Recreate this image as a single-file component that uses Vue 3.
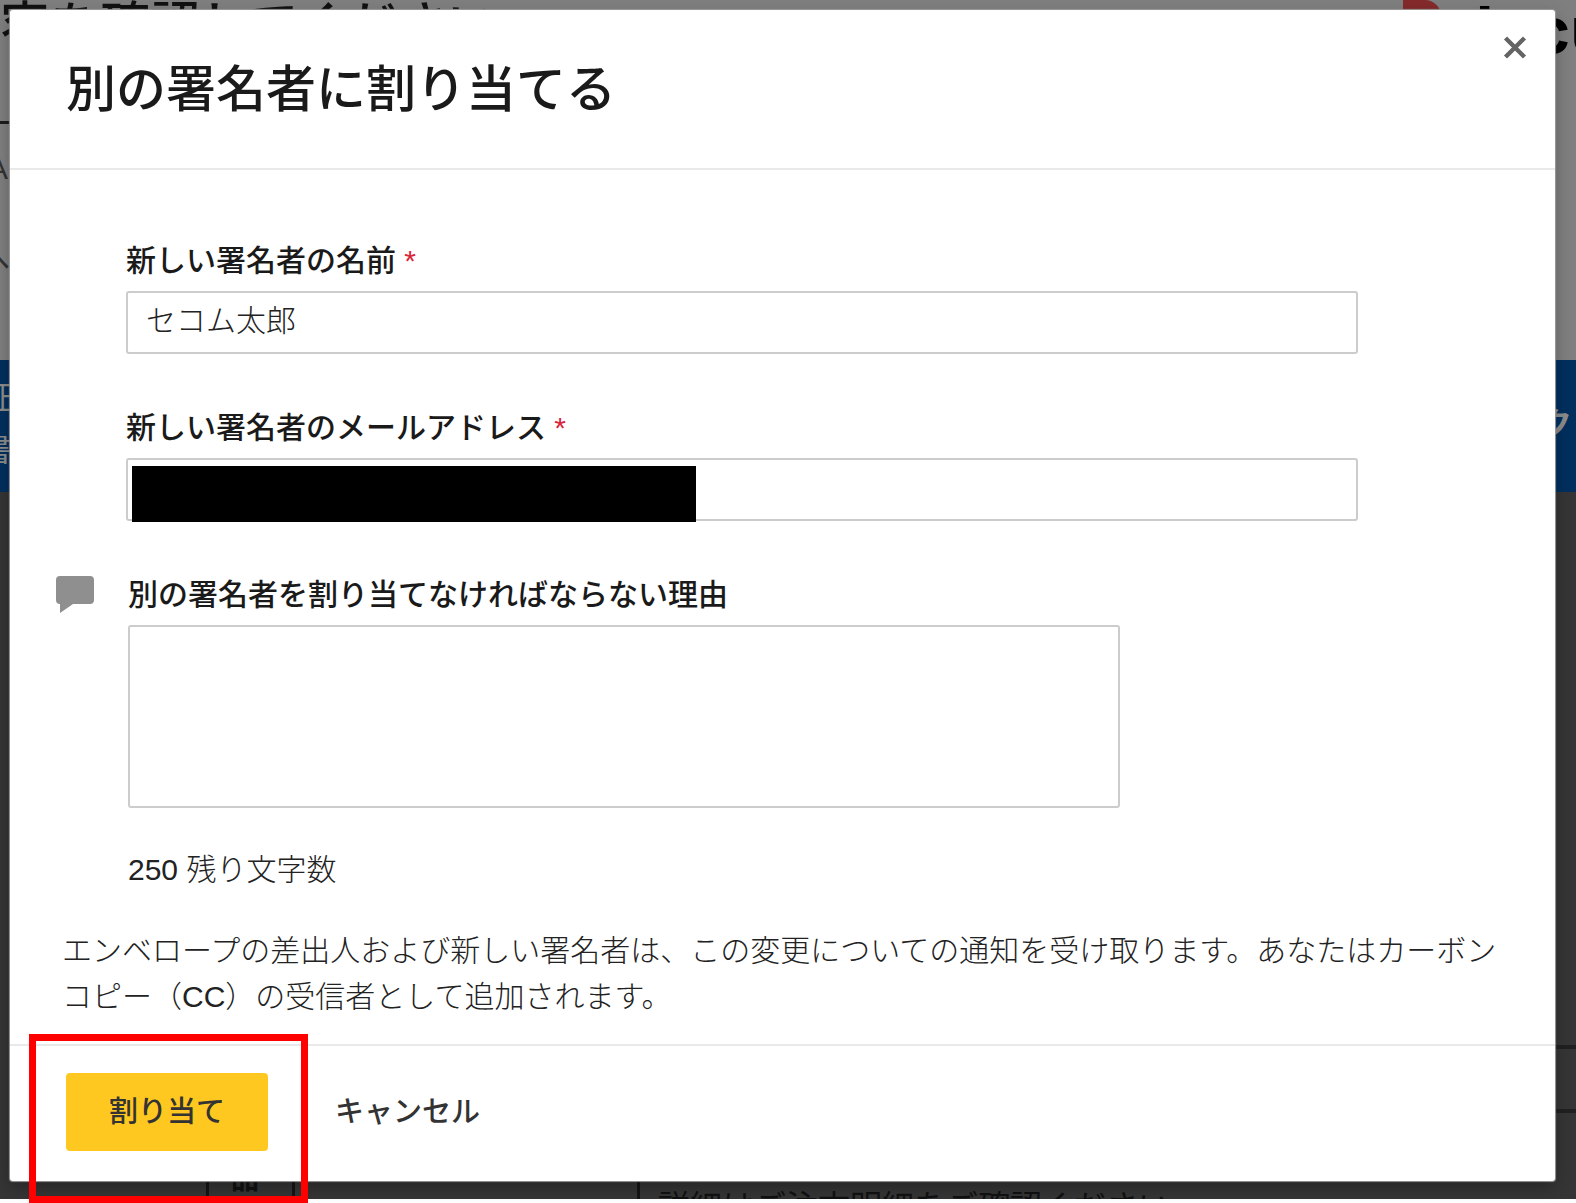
<script setup>
import { ref, computed } from 'vue'

const MAX_LENGTH = 250
const signerName = ref('セコム太郎')
const signerEmail = ref('')
const reason = ref('')
const remaining = computed(() => MAX_LENGTH - reason.value.length)
</script>

<template>
  <div class="page">
    <div class="backdrop" aria-hidden="true">
      <div class="top-area">
        <div class="top-main">
          <div class="top-heading">容を確認してください</div>
          <div class="top-rule"></div>
          <div class="peek first">A</div>
          <div class="peek second">へ</div>
        </div>
        <div class="brand">
          <span class="brand-mark"></span>
          <span class="brand-name">docusign</span>
        </div>
      </div>
      <div class="band">
        <div class="band-left">証<br />書</div>
        <div class="band-right">ク</div>
      </div>
      <div class="document">
        <div class="doc-rows"></div>
        <div class="doc-table">
          <div class="cell item">品</div>
          <div class="cell blank"></div>
          <div class="cell detail">詳細はご注文明細をご確認ください</div>
        </div>
      </div>
    </div>

    <main class="modal" role="dialog" aria-labelledby="dialog-title">
      <header class="modal-header">
        <h1 id="dialog-title">別の署名者に割り当てる</h1>
        <button class="close" type="button" aria-label="閉じる">
          <svg viewBox="0 0 24 24" width="24" height="24">
            <path d="M2.5 2 21.5 21M21.5 2 2.5 21" fill="none" stroke="#646464" stroke-width="4.4" />
          </svg>
        </button>
      </header>

      <section class="modal-body">
        <div class="field">
          <label for="signer-name">新しい署名者の名前 <span class="required">*</span></label>
          <input id="signer-name" v-model="signerName" type="text" />
        </div>
        <div class="field">
          <label for="signer-email">新しい署名者のメールアドレス <span class="required">*</span></label>
          <div class="masked">
            <input id="signer-email" v-model="signerEmail" type="email" />
            <span class="mask"></span>
          </div>
        </div>
        <div class="comment">
          <svg class="comment-icon" viewBox="0 0 38 38" width="38" height="38">
            <path d="M4 0H34Q38 0 38 4V24Q38 28 34 28H17L4 37V28Q0 28 0 24V4Q0 0 4 0Z" fill="#8f8f8f" />
          </svg>
          <div class="comment-main">
            <label for="reason">別の署名者を割り当てなければならない理由</label>
            <textarea id="reason" v-model="reason" :maxlength="MAX_LENGTH"></textarea>
            <div class="counter">{{ remaining }} 残り文字数</div>
          </div>
        </div>
        <p class="notice">エンベロープの差出人および新しい署名者は、この変更についての通知を受け取ります。あなたはカーボンコピー（CC）の受信者として追加されます。</p>
      </section>

      <footer class="modal-footer">
        <button class="primary" type="button">割り当て</button>
        <button class="cancel" type="button">キャンセル</button>
        <span class="highlight"></span>
      </footer>
    </main>
  </div>
</template>

<style>
body {
  margin: 0;
  background: #fff;
}
</style>

<style scoped>
* {
  box-sizing: border-box;
}
.page {
  display: grid;
  grid-template-columns: minmax(0, 1fr);
  font-family: "Liberation Sans", "Noto Sans CJK JP", sans-serif;
  font-size: 30px;
  color: #222;
}
.page > * {
  grid-area: 1 / 1;
}

/* Dimmed page behind the dialog */
.backdrop {
  display: flex;
  flex-direction: column;
  margin-bottom: 4px;
  overflow: hidden;
  white-space: nowrap;
}
.top-area {
  display: flex;
  justify-content: space-between;
  height: 360px;
  background: #7f7f7f;
  color: #111;
}
.top-heading {
  height: 121px;
  font-size: 50px;
  font-weight: 500;
  line-height: 52px;
}
.top-rule {
  height: 3px;
  background: #1c1c1c;
}
.peek {
  margin-left: -12px;
  color: #333;
  line-height: 90px;
}
.peek.second {
  margin-left: -20px;
}
.brand {
  display: flex;
  flex: none;
  width: 173px;
  color: #000;
}
.brand-mark {
  flex: none;
  width: 38px;
  height: 40px;
  border-radius: 0 16px 0 0;
  background: #842a2c;
}
.brand-name {
  margin-left: 12px;
  font-family: Inter, sans-serif;
  font-size: 64px;
  font-weight: 700;
  line-height: 60px;
}
.band {
  display: flex;
  justify-content: space-between;
  height: 132px;
  padding-top: 12px;
  background: #002f5e;
  color: #8c8c8c;
  font-size: 32px;
  line-height: 52px;
}
.band-left {
  margin-left: -20px;
}
.band-right {
  width: 36px;
  padding-top: 36px;
  font-weight: 700;
  line-height: 32px;
}
.document {
  display: flex;
  flex: 1;
  flex-direction: column;
  background: #353535;
  color: #111;
}
.doc-rows {
  flex: 1;
  padding-left: 50%;
}
.doc-rows::after {
  content: "";
  display: block;
  height: 60px;
  margin-top: 553px;
  border-top: 4px solid #202020;
  border-bottom: 4px solid #202020;
}
.doc-table {
  display: flex;
  height: 20px;
  padding-left: 206px;
}
.cell {
  border-left: 3px solid #151515;
}
.item {
  width: 86px;
  padding-left: 22px;
  font-size: 28px;
  font-weight: 700;
  line-height: 2px;
}
.blank {
  width: 345px;
}
.detail {
  padding-left: 18px;
  font-size: 32px;
  line-height: 56px;
}

/* Dialog */
.modal {
  display: flex;
  flex-direction: column;
  margin: 10px 21px 22px 10px;
  border-radius: 3px;
  background: #fff;
  box-shadow: 0 0 1px 1px #999, 0 6px 16px rgba(0, 0, 0, 0.3);
}
.modal-header {
  display: flex;
  justify-content: space-between;
  align-items: flex-start;
  height: 160px;
  padding: 26px 28px 0 56px;
  border-bottom: 2px solid #e9e9e9;
}
h1 {
  margin: 0;
  color: #1a1a1a;
  font-size: 50px;
  font-weight: 500;
  line-height: 108px;
}
button {
  padding: 0 0 6px;
  border: 0;
  background: none;
  color: #333;
  font-family: inherit;
  font-size: 29px;
  font-weight: 500;
  cursor: pointer;
}
.close {
  width: 24px;
  height: 24px;
  padding: 0;
}
.close svg {
  display: block;
}
.modal-body {
  padding: 70px 35px 24px 46px;
}
.field {
  margin: 0 162px 53px 70px;
}
label {
  display: block;
  margin-bottom: 10px;
  color: #1a1a1a;
  font-weight: 500;
  line-height: 41px;
}
.required {
  color: #d9263a;
}
input,
textarea {
  display: block;
  width: 100%;
  border: 2px solid #ccc;
  border-radius: 3px;
  background: #fff;
  color: #222;
  font-family: inherit;
  font-size: 30px;
  font-weight: 300;
  outline: none;
}
input {
  height: 63px;
  padding: 0 18px 9px;
}
.masked {
  position: relative;
}
.mask {
  position: absolute;
  top: 8px;
  left: 6px;
  width: 564px;
  height: 56px;
  background: #000;
}
.comment {
  display: flex;
  gap: 34px;
}
.comment-icon {
  flex: none;
  margin-top: 2px;
}
.comment-main {
  flex: 1;
  margin-right: 400px;
}
textarea {
  height: 183px;
  resize: none;
}
.counter {
  margin-top: 42px;
  font-weight: 300;
  line-height: 40px;
}
.notice {
  margin: 38px 0 0 6px;
  font-weight: 300;
  line-height: 46px;
}
.modal-footer {
  position: relative;
  display: flex;
  align-items: center;
  gap: 67px;
  padding: 27px 56px 30px;
  border-top: 2px solid #e9e9e9;
}
.primary {
  width: 202px;
  height: 78px;
  border-radius: 4px;
  background: #ffc820;
}
.highlight {
  position: absolute;
  top: -12px;
  left: 19px;
  width: 279px;
  height: 169px;
  border: 7px solid #f00;
  pointer-events: none;
}
</style>
